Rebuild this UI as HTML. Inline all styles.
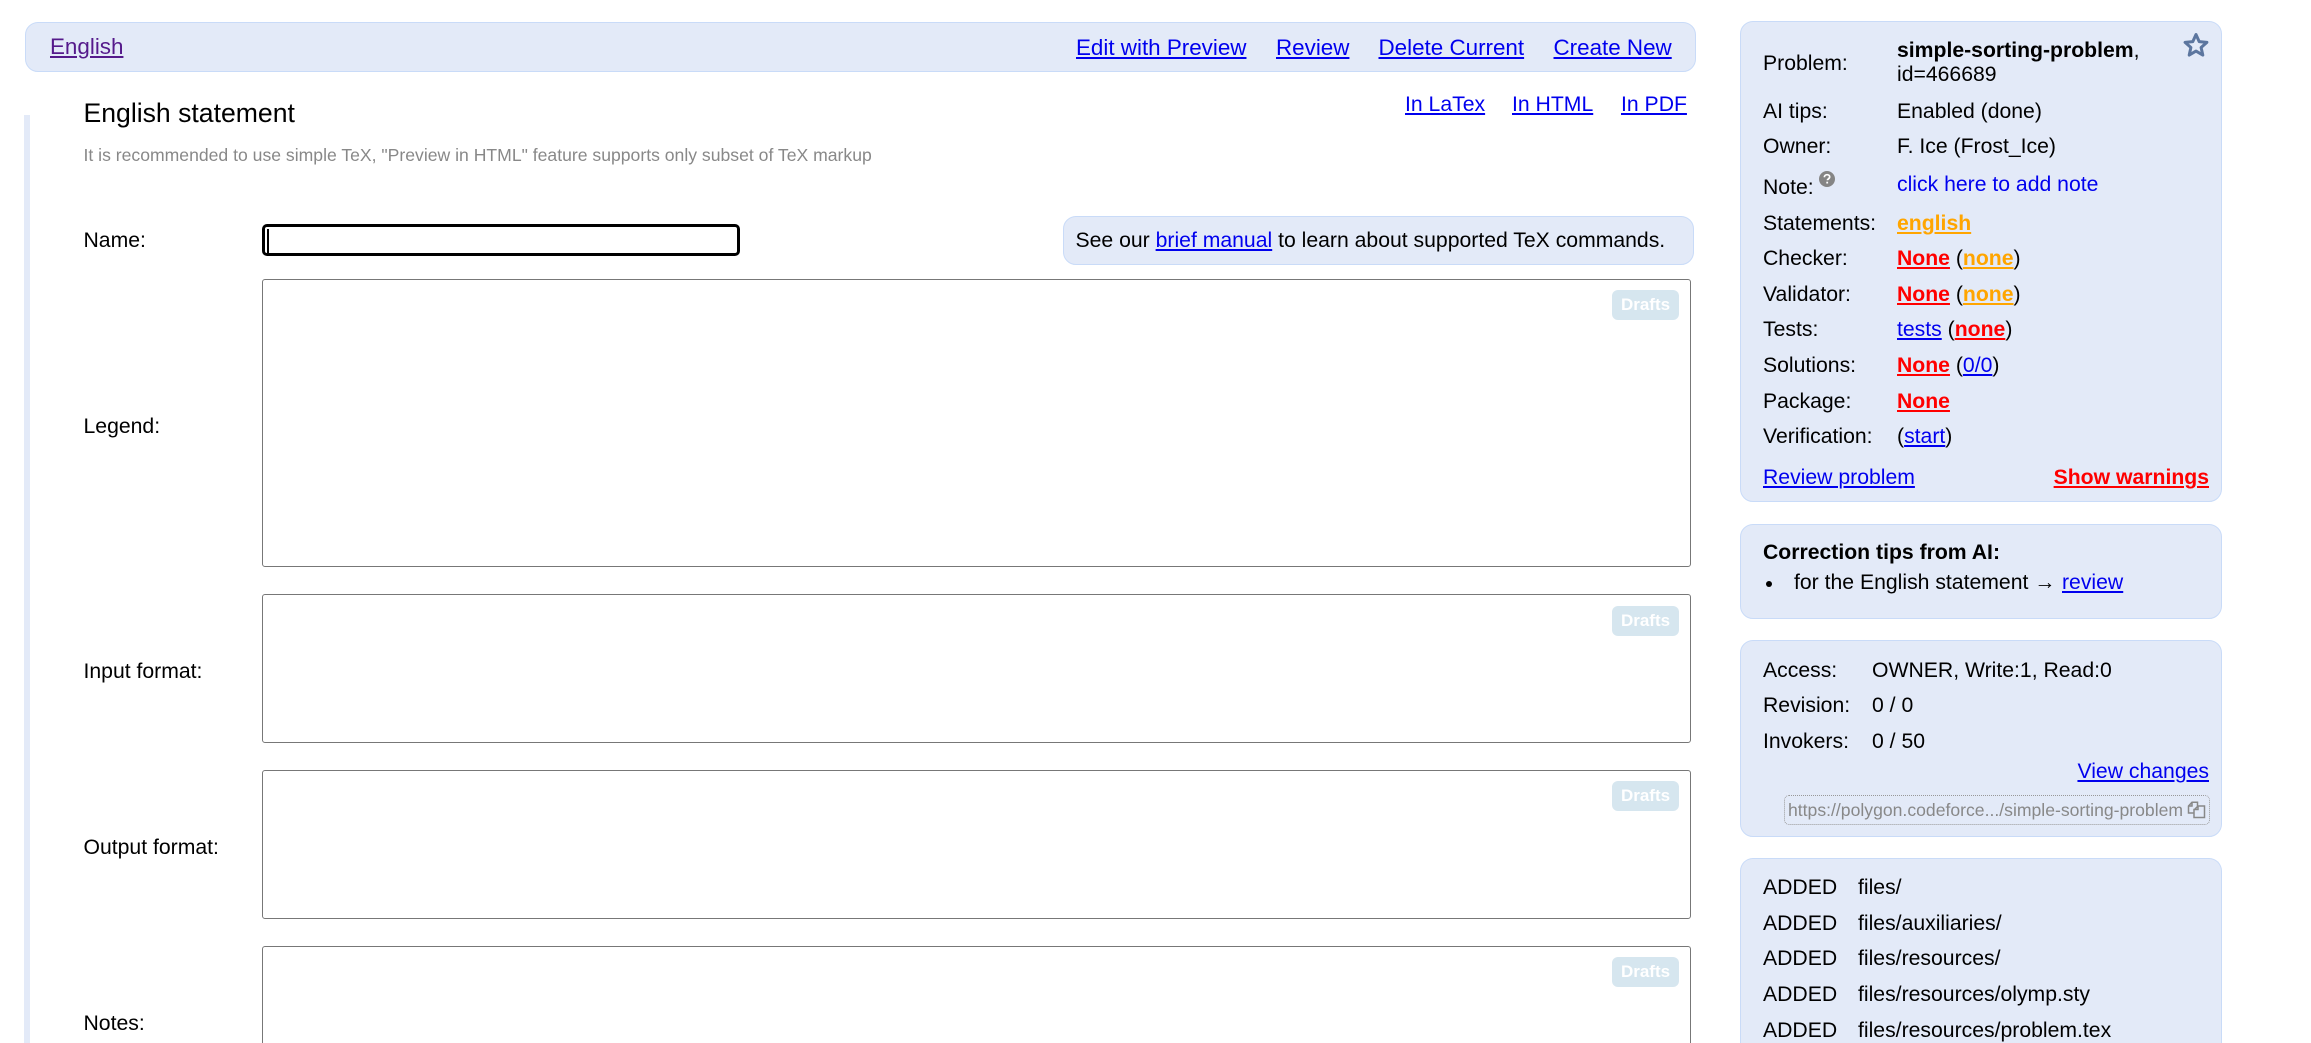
<!DOCTYPE html>
<html lang="en">
<head>
<meta charset="utf-8">
<title>English statement</title>
<style>
html,body{margin:0;padding:0;background:#fff;width:2311px;height:1043px;overflow:hidden}
body{position:relative;font-family:"Liberation Sans",Arial,sans-serif;font-size:21.2px;color:#000}
.t{position:absolute;line-height:24px;white-space:nowrap}
.h{font-size:22.4px}
a{color:#0000ee;text-decoration:underline;text-decoration-thickness:2px;text-underline-offset:2px}
a.v{color:#551a8b}
a.o{color:#ffa500;font-weight:bold}
a.r{color:#f00;font-weight:bold}
.p{position:absolute;box-sizing:border-box;background:#e3eaf8;border:1.5px solid #c9dbf8;border-radius:13px}
.ta{position:absolute;box-sizing:border-box;left:262px;width:1429px;border:1.5px solid #777;border-radius:3px;background:#fff}
.d{position:absolute;left:1612px;width:67px;height:30px;border-radius:6px;background:#d6e6ef;color:#fff;font-weight:bold;font-size:17px;line-height:30px;text-align:center}
</style>
</head>
<body>
<div class="p" style="left:25px;top:22px;width:1671px;height:50px"></div>
<div class="t h" style="left:50px;top:35px"><a class="v" href="#">English</a></div>
<div class="t h" style="left:1076px;top:36px"><a href="#">Edit with Preview</a></div>
<div class="t h" style="left:1276px;top:36px"><a href="#">Review</a></div>
<div class="t h" style="left:1378.5px;top:36px"><a href="#">Delete Current</a></div>
<div class="t h" style="left:1553.5px;top:36px"><a href="#">Create New</a></div>

<div style="position:absolute;left:24px;top:115px;width:6px;height:928px;background:#e3eaf8"></div>

<div class="t" style="left:83.5px;top:98px;font-size:26.6px;line-height:30px">English statement</div>
<div class="t" style="left:83.5px;top:145px;font-size:17.6px;line-height:20px;color:#888">It is recommended to use simple TeX, "Preview in HTML" feature supports only subset of TeX markup</div>
<div class="t" style="left:1405px;top:93px"><a href="#">In LaTex</a></div>
<div class="t" style="left:1512px;top:93px"><a href="#">In HTML</a></div>
<div class="t" style="left:1621px;top:93px"><a href="#">In PDF</a></div>

<div class="t" style="left:83.5px;top:229px">Name:</div>
<div style="position:absolute;box-sizing:border-box;left:262px;top:224px;width:478px;height:32px;border:3px solid #000;border-radius:5px;background:#fff"></div>
<div style="position:absolute;left:267px;top:229px;width:2px;height:24px;background:#000"></div>
<div class="p" style="left:1063px;top:216px;width:631px;height:49px"></div>
<div class="t" style="left:1075.5px;top:229px">See our <a href="#">brief manual</a> to learn about supported TeX commands.</div>

<div class="t" style="left:83.5px;top:415px">Legend:</div>
<div class="ta" style="top:279px;height:288px"></div>
<div class="d" style="top:290px">Drafts</div>

<div class="t" style="left:83.5px;top:660px">Input format:</div>
<div class="ta" style="top:594px;height:149px"></div>
<div class="d" style="top:606px">Drafts</div>

<div class="t" style="left:83.5px;top:836px">Output format:</div>
<div class="ta" style="top:770px;height:149px"></div>
<div class="d" style="top:781px">Drafts</div>

<div class="t" style="left:83.5px;top:1012px">Notes:</div>
<div class="ta" style="top:946px;height:97px;border-bottom:none;border-bottom-left-radius:0;border-bottom-right-radius:0"></div>
<div class="d" style="top:957px">Drafts</div>

<!-- Panel 1 -->
<div class="p" style="left:1740px;top:21px;width:482px;height:481px"></div>
<svg style="position:absolute;left:2182px;top:31px" width="28" height="28" viewBox="0 0 28 28"><path d="M14 3.5l3.2 7.1 7.7.8-5.8 5.1 1.7 7.6-6.800-4-6.800 4 1.700-7.600-5.800-5.100 7.700-.8z" fill="none" stroke="#5c769f" stroke-width="3" stroke-linejoin="round"/></svg>

<div class="t" style="left:1763px;top:52px">Problem:</div>
<div class="t" style="left:1897px;top:39px"><b>simple-sorting-problem</b>,</div>
<div class="t" style="left:1897px;top:63px">id=466689</div>
<div class="t" style="left:1763px;top:100px">AI tips:</div>
<div class="t" style="left:1897px;top:100px">Enabled (done)</div>
<div class="t" style="left:1763px;top:135px">Owner:</div>
<div class="t" style="left:1897px;top:135px">F. Ice (Frost_Ice)</div>
<div class="t" style="left:1763px;top:176px">Note:</div>
<svg style="position:absolute;left:1819px;top:171px" width="16" height="16" viewBox="0 0 16 16"><circle cx="8" cy="8" r="8" fill="#858585"/><path d="M5.400 6.200c0-1.600 1.200-2.500 2.700-2.500s2.600.9 2.600 2.200c0 1.100-.7 1.600-1.400 2.100-.6.4-.9.7-.9 1.300" fill="none" stroke="#fff" stroke-width="1.700"/><rect x="7.300" y="10.700" width="1.800" height="1.800" fill="#fff"/></svg>
<div class="t" style="left:1897px;top:173px"><a href="#" style="text-decoration:none">click here to add note</a></div>
<div class="t" style="left:1763px;top:212px">Statements:</div>
<div class="t" style="left:1897px;top:212px"><a class="o" href="#">english</a></div>
<div class="t" style="left:1763px;top:247px">Checker:</div>
<div class="t" style="left:1897px;top:247px"><a class="r" href="#">None</a> (<a class="o" href="#">none</a>)</div>
<div class="t" style="left:1763px;top:283px">Validator:</div>
<div class="t" style="left:1897px;top:283px"><a class="r" href="#">None</a> (<a class="o" href="#">none</a>)</div>
<div class="t" style="left:1763px;top:318px">Tests:</div>
<div class="t" style="left:1897px;top:318px"><a href="#">tests</a> (<a class="r" href="#">none</a>)</div>
<div class="t" style="left:1763px;top:354px">Solutions:</div>
<div class="t" style="left:1897px;top:354px"><a class="r" href="#">None</a> (<a href="#">0/0</a>)</div>
<div class="t" style="left:1763px;top:390px">Package:</div>
<div class="t" style="left:1897px;top:390px"><a class="r" href="#">None</a></div>
<div class="t" style="left:1763px;top:425px">Verification:</div>
<div class="t" style="left:1897px;top:425px">(<a href="#">start</a>)</div>
<div class="t" style="left:1763px;top:466px"><a href="#">Review problem</a></div>
<div class="t" style="right:102px;top:466px"><a class="r" href="#">Show warnings</a></div>

<!-- Panel 2 -->
<div class="p" style="left:1740px;top:524px;width:482px;height:95px"></div>
<div class="t" style="left:1763px;top:541px"><b>Correction tips from AI:</b></div>
<div style="position:absolute;left:1766px;top:581px;width:6px;height:6px;border-radius:50%;background:#000"></div>
<div class="t" style="left:1794px;top:571px">for the English statement →</div>
<div class="t" style="left:2062px;top:571px"><a href="#">review</a></div>

<!-- Panel 3 -->
<div class="p" style="left:1740px;top:640px;width:482px;height:197px"></div>
<div class="t" style="left:1763px;top:659px">Access:</div>
<div class="t" style="left:1872px;top:659px">OWNER, Write:1, Read:0</div>
<div class="t" style="left:1763px;top:694px">Revision:</div>
<div class="t" style="left:1872px;top:694px">0 / 0</div>
<div class="t" style="left:1763px;top:730px">Invokers:</div>
<div class="t" style="left:1872px;top:730px">0 / 50</div>
<div class="t" style="right:102px;top:760px"><a href="#">View changes</a></div>
<div style="position:absolute;box-sizing:border-box;left:1784px;top:795px;width:426px;height:30px;border:1.5px dotted #999;border-radius:5px"></div>
<div class="t" style="left:1788px;top:800px;font-size:17.6px;line-height:20px;color:#888">https://polygon.codeforce.../simple-sorting-problem</div>
<svg style="position:absolute;left:2187px;top:801px" width="19" height="18" viewBox="0 0 19 18"><path d="M7 12H1.500V5L5 1.200h5.500V5M5 1.500V5H1.500" fill="none" stroke="#888" stroke-width="1.500"/><path d="M7.500 8.500L11 5h6.500v11.500h-10.500V8.500H11V5" fill="none" stroke="#888" stroke-width="1.500"/></svg>

<!-- Panel 4 -->
<div class="p" style="left:1740px;top:858px;width:482px;height:185px;border-bottom:none;border-bottom-left-radius:0;border-bottom-right-radius:0"></div>
<div class="t" style="left:1763px;top:876px">ADDED</div><div class="t" style="left:1858px;top:876px">files/</div>
<div class="t" style="left:1763px;top:912px">ADDED</div><div class="t" style="left:1858px;top:912px">files/auxiliaries/</div>
<div class="t" style="left:1763px;top:947px">ADDED</div><div class="t" style="left:1858px;top:947px">files/resources/</div>
<div class="t" style="left:1763px;top:983px">ADDED</div><div class="t" style="left:1858px;top:983px">files/resources/olymp.sty</div>
<div class="t" style="left:1763px;top:1019px">ADDED</div><div class="t" style="left:1858px;top:1019px">files/resources/problem.tex</div>
</body>
</html>
